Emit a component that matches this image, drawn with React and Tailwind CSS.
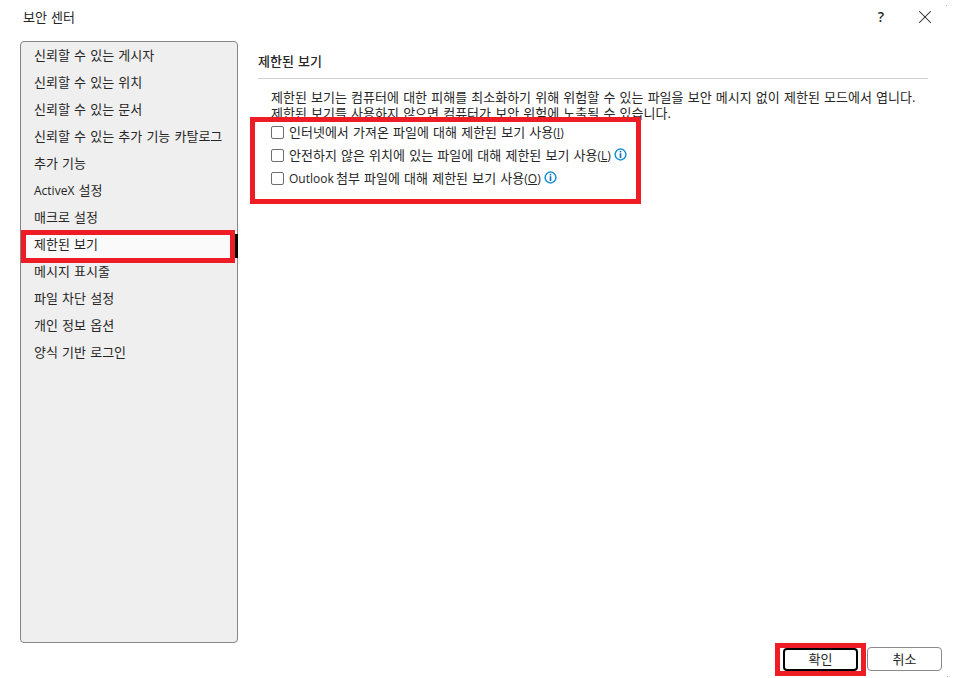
import { X } from "lucide-react";

const font = { fontFamily: '"Open Sans", "Noto Sans CJK KR", sans-serif' };

const menuItems = [
  "신뢰할 수 있는 게시자",
  "신뢰할 수 있는 위치",
  "신뢰할 수 있는 문서",
  "신뢰할 수 있는 추가 기능 카탈로그",
  "추가 기능",
  <>
    <span className="text-[12px]">ActiveX</span> 설정
  </>,
  "매크로 설정",
  "제한된 보기",
  "메시지 표시줄",
  "파일 차단 설정",
  "개인 정보 옵션",
  "양식 기반 로그인",
];

const options = [
  { label: "인터넷에서 가져온 파일에 대해 제한된 보기 사용", key: "I", info: false },
  { label: "안전하지 않은 위치에 있는 파일에 대해 제한된 보기 사용", key: "L", info: true },
  {
    label: (
      <>
        <span className="text-[12px] -mr-[2px]">Outlook</span> 첨부 파일에 대해 제한된 보기 사용
      </>
    ),
    key: "O",
    info: true,
  },
];

function InfoIcon() {
  return (
    <svg width="13" height="13" viewBox="0 0 13 13" className="ml-[3px] mb-[2px] shrink-0">
      <circle cx="6.5" cy="6.5" r="5.4" fill="none" stroke="#1b8fd6" strokeWidth="1.5" />
      <rect x="5.7" y="2.9" width="1.6" height="1.5" fill="#0f6cbd" />
      <rect x="5.7" y="5.2" width="1.6" height="4.8" fill="#0f6cbd" />
    </svg>
  );
}

export default function App() {
  return (
    <div
      className="relative w-[961px] h-[678px] bg-white overflow-hidden flex flex-col text-[13px] text-[#262626] [word-spacing:0.8px]"
      style={font}
    >
      {/* title bar */}
      <div className="h-[41px] flex items-start justify-between pl-[23px] pr-[25px] shrink-0">
        <span className="mt-[8px] leading-[18px]">보안 센터</span>
        <div className="flex items-center gap-[30px] mt-[6px]">
          <span className="font-semibold leading-[22px] text-[14px]">?</span>
          <X size={22} strokeWidth={1.1} color="#222" />
        </div>
      </div>

      <div className="flex flex-1 min-h-0 pl-[20px] pr-[33px] gap-[20px]">
        {/* sidebar */}
        <div className="w-[218px] h-[602px] shrink-0 bg-[#efefef] border border-[#868686] rounded-[4px] relative">
          {menuItems.map((item, i) => {
            const selected = i === 7;
            return (
              <div
                key={i}
                className={`h-[27px] pl-[13px] pb-[1px] flex items-center whitespace-pre leading-none ${selected ? "relative bg-[#fafafa]" : ""}`}
              >
                <span>{item}</span>
                {selected && (
                  <>
                    <div className="absolute right-[-1px] top-[3px] bottom-0 w-[3px] bg-black" />
                    <div className="absolute left-0 right-[2px] top-[-1px] bottom-[-5px] border-[5px] border-[#ee1c25]" />
                  </>
                )}
              </div>
            );
          })}
        </div>

        {/* content */}
        <div className="flex-1 min-w-0">
          <div className="h-[38px] pt-[11px] border-b border-[#cfcfcf] font-medium leading-[18px]">
            제한된 보기
          </div>
          <div className="pl-[13px] pt-[10px] leading-[16px] whitespace-nowrap">
            <p>제한된 보기는 컴퓨터에 대한 피해를 최소화하기 위해 위험할 수 있는 파일을 보안 메시지 없이 제한된 모드에서 엽니다.</p>
            <p>제한된 보기를 사용하지 않으면 컴퓨터가 보안 위험에 노출될 수 있습니다.</p>
          </div>
          <div className="relative pl-[13px]">
            {options.map((opt) => (
              <div key={opt.key} className="h-[23px] flex items-center">
                <span className="w-[13px] h-[13px] border border-[#6e6e6e] rounded-[2px] bg-white mr-[5px] shrink-0" />
                <span className="leading-none whitespace-pre pb-[1px]">
                  {opt.label}
                  <span className="text-[12px]">
                    (<span className="underline">{opt.key}</span>)
                  </span>
                </span>
                {opt.info && <InfoIcon />}
              </div>
            ))}
            <div className="absolute left-[-8px] top-[-4px] w-[391px] h-[87px] border-[5px] border-[#ee1c25]" />
          </div>
        </div>
      </div>

      {/* footer buttons */}
      <div className="absolute right-[19px] bottom-[7px] flex items-center gap-[9px]">
        <div className="relative">
          <button className="w-[75px] h-[23px] border-2 border-black rounded-[4px] bg-white leading-none block">
            확인
          </button>
          <div className="absolute left-[-8px] right-[-8px] top-[-5px] bottom-[-5px] border-[5px] border-[#ee1c25]" />
        </div>
        <button className="w-[75px] h-[24px] border border-[#8a8a8a] rounded-[4px] bg-white leading-none">
          취소
        </button>
      </div>

      {/* stray marks from the capture */}
      <div className="absolute left-[946px] top-[5px] w-px h-px bg-[#ee8a8a]" />
      <div className="absolute left-[947px] top-[676px] w-px h-px bg-[#ee8a8a]" />
    </div>
  );
}
